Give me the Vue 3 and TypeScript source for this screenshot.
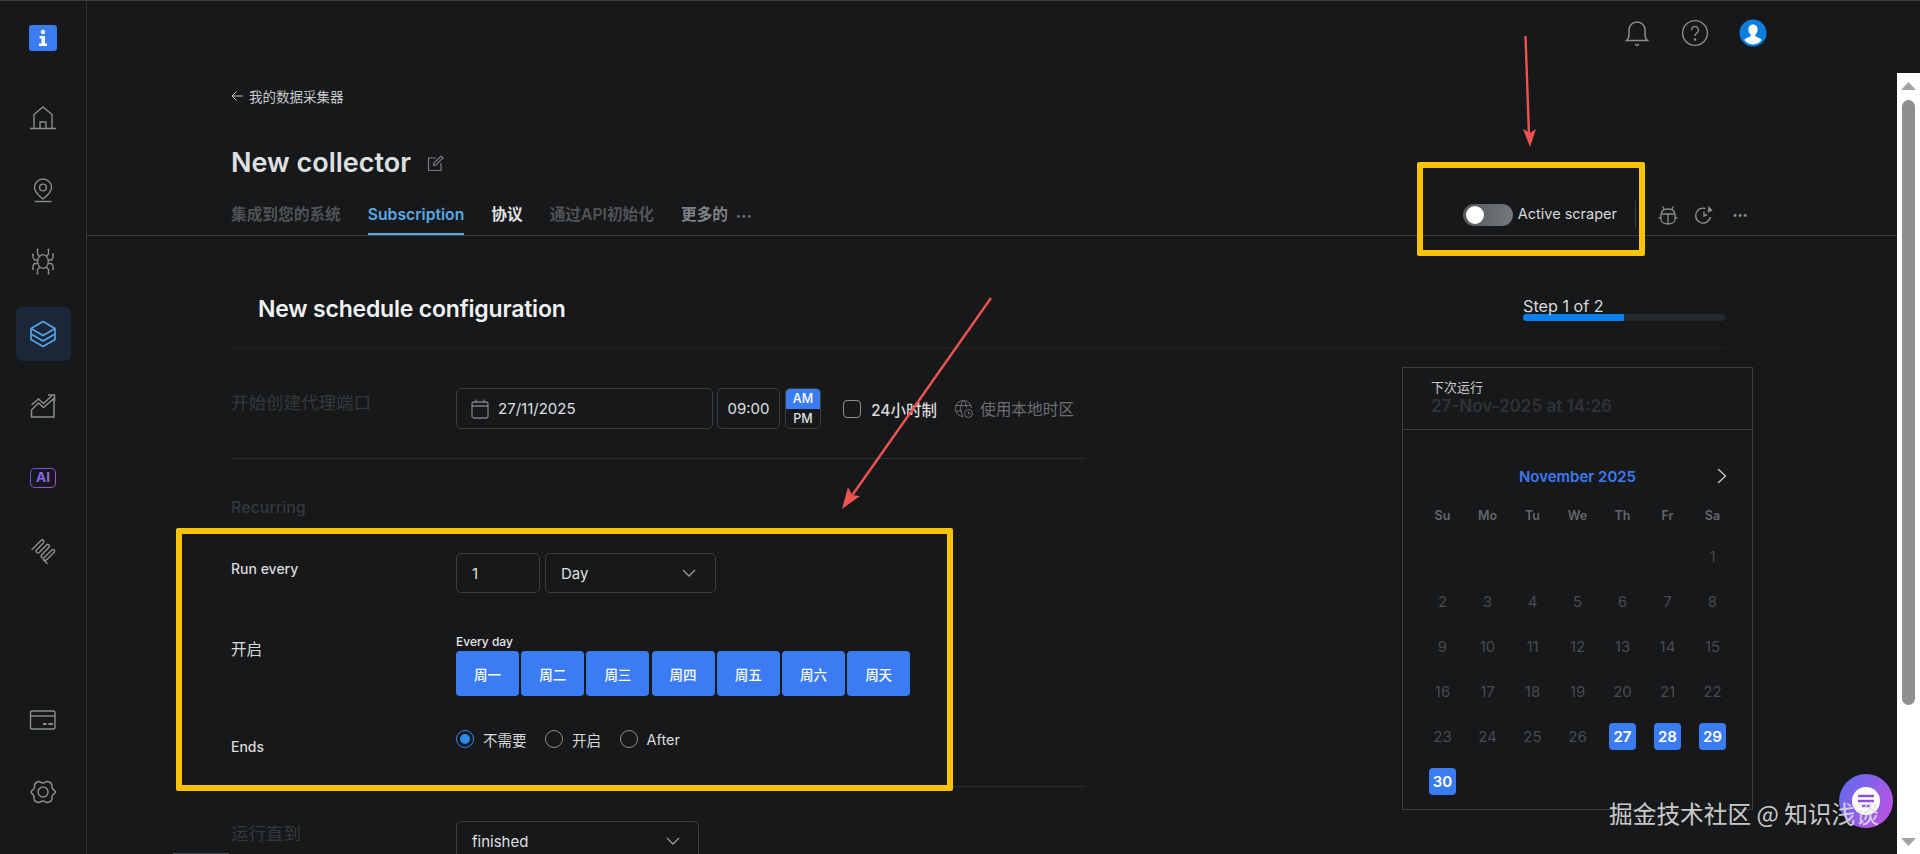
<script setup lang="ts">
const weekdays: string[] = ['周一', '周二', '周三', '周四', '周五', '周六', '周天']
const headers: string[] = ['Su', 'Mo', 'Tu', 'We', 'Th', 'Fr', 'Sa']
const selected: number[] = [27, 28, 29, 30]
const leading: number[] = [0, 0, 0, 0, 0, 0]
const days: number[] = Array.from({ length: 30 }, (_, i) => i + 1)
</script>

<template>
  <div class="app">
    <aside class="sidebar">
      <div class="logo">
        <svg width="12" height="18" viewBox="0 0 12 18"><circle cx="6" cy="3" r="2.2" fill="#fff"/><path d="M2.500 7h5.500v7.500h2V17H2v-2.500h2.500V9.500h-2z" fill="#fff"/></svg>
      </div>
      <nav class="nav">
        <a class="nav-item">
          <svg width="30" height="30" viewBox="0 0 30 30" fill="none" stroke="#8b8d8f" stroke-width="1.400"><path d="M2 26.500h26M6 26V12.500L15 5l9 7.500V26"/><path d="M12 26v-6h6v6"/></svg>
        </a>
        <a class="nav-item">
          <svg width="30" height="30" viewBox="0 0 30 30" fill="none" stroke="#8b8d8f" stroke-width="1.400"><path d="M15 25c-3.800-3.200-8.500-6.500-8.500-11.500a8.500 8.500 0 0 1 17 0C23.500 18.500 18.800 21.800 15 25z"/><circle cx="15" cy="13.500" r="3.400"/><path d="M6.500 27.500h17"/></svg>
        </a>
        <a class="nav-item">
          <svg width="30" height="30" viewBox="0 0 30 30" fill="none" stroke="#8b8d8f" stroke-width="1.300"><ellipse cx="15" cy="15.500" rx="5.300" ry="6.800"/><path d="M11.800 10.500 9.500 8V4M18.200 10.500 20.500 8V4M9.700 14H6.500L5 11.500V9M20.300 14h3.200l1.500-2.500V9M9.800 17.500H6.500L5 19.500v3M20.200 17.500h3.300l1.500 2v3M11.800 21l-2.300 2.500V27M18.200 21l2.300 2.500V27"/><g fill="#8b8d8f" stroke="none"><circle cx="9.500" cy="3.500" r="1"/><circle cx="20.500" cy="3.500" r="1"/><circle cx="5" cy="8.500" r="1"/><circle cx="25" cy="8.500" r="1"/><circle cx="5" cy="23" r="1"/><circle cx="25" cy="23" r="1"/><circle cx="9.500" cy="27.500" r="1"/><circle cx="20.500" cy="27.500" r="1"/></g></svg>
        </a>
        <a class="nav-item active">
          <svg width="30" height="30" viewBox="0 0 30 30" fill="none" stroke="#52a5e8" stroke-width="1.700" stroke-linejoin="round"><path d="M15 2.500 27 9.500v11l-12 7-12-7v-11z"/><path d="M3 9.500l12 7 12-7M3 15l12 7 12-7"/></svg>
        </a>
        <a class="nav-item">
          <svg width="30" height="30" viewBox="0 0 30 30" fill="none" stroke="#8b8d8f" stroke-width="1.500"><path d="M3.500 26V19l7-7 5 4.500L26 7.500V26z"/><path d="M3.500 14l7-6 5 4.500 8.500-8"/><path d="M20 4h6.500v6.500"/></svg>
        </a>
        <a class="nav-item">
          <span class="ai-badge">AI</span>
        </a>
        <a class="nav-item">
          <svg width="30" height="30" viewBox="0 0 30 30" fill="none" stroke="#8b8d8f" stroke-width="1.500" stroke-linecap="round" stroke-linejoin="round"><path d="M4 14.500 13 5.500c1.500-1.500 4 .5 2.500 2.300L8.500 15c-1.500 1.800 1 4 2.700 2.500L18.500 10c1.500-1.500 4 .5 2.500 2.300L13.500 20c-1.500 1.800 1 4 2.700 2.500L24 15c1.700-1.700 3.500.7 2.200 2.300L19 24.500c-1 1-2.500 1-3.500 0"/><path d="M15.500 24.500 19 28.500"/></svg>
        </a>
      </nav>
      <div class="nav-bottom">
        <a class="nav-item">
          <svg width="30" height="30" viewBox="0 0 30 30" fill="none" stroke="#8b8d8f" stroke-width="1.400"><rect x="2.500" y="6" width="24.500" height="18" rx="1.500"/><path d="M2.500 11h24.500"/><path d="M15 19h3.500M20.500 19H25" stroke-width="1.800"/></svg>
        </a>
        <a class="nav-item">
          <svg width="30" height="30" viewBox="0 0 30 30" fill="none" stroke="#8b8d8f" stroke-width="1.500"><path d="M11.200 4.500c1.300 0 1.500 1.500 3.800 1.500s2.500-1.500 3.800-1.500c1.600 0 4.200 1.500 5 2.900.6 1.200-.5 2.200.6 4.100 1.100 2 3.100 1.800 3.100 3.500s-2 1.500-3.100 3.500c-1.100 1.900 0 2.900-.6 4.100-.8 1.400-3.400 2.900-5 2.900-1.300 0-1.500-1.500-3.800-1.500s-2.500 1.500-3.800 1.500c-1.600 0-4.200-1.500-5-2.900-.6-1.200.5-2.200-.6-4.100C5 16.500 3 16.700 3 15s2-1.500 3.100-3.500c1.100-1.900 0-2.900.6-4.100.8-1.400 2.900-2.900 4.500-2.900z"/><circle cx="15" cy="15" r="5"/></svg>
        </a>
      </div>
    </aside>

    <div class="main">
      <header class="topbar">
        <svg class="top-icon" width="28" height="28" viewBox="0 0 28 28" fill="none" stroke="#8b8d8f" stroke-width="1.500"><path d="M3.500 21.500c2-1.500 2.500-3 2.500-6.500V11a8 8 0 0 1 16 0v4c0 3.500.5 5 2.500 6.500z"/><path d="M12 25l2 1.500 2-1.500"/></svg>
        <svg class="top-icon" width="28" height="28" viewBox="0 0 28 28" fill="none" stroke="#8b8d8f" stroke-width="1.400"><circle cx="14" cy="14" r="12.400"/><path d="M10.500 11a3.500 3.500 0 1 1 5.500 2.800c-1.300.9-2 1.500-2 3.200"/><circle cx="14" cy="20.500" r=".6" fill="#8b8d8f"/></svg>
        <svg class="top-icon" width="28" height="28" viewBox="0 0 28 28"><circle cx="14" cy="14" r="13.500" fill="#0b7fe0"/><path d="M14 5.500c2.800 0 4.600 2.200 4.600 5 0 2.100-1 4-2.200 5v1.800c1.500 1 5.200 1.600 6.300 3.800-2 2.700-5.200 4.400-8.700 4.400s-6.700-1.700-8.700-4.400c1.100-2.200 4.800-2.800 6.300-3.800v-1.800c-1.200-1-2.200-2.900-2.200-5 0-2.800 1.800-5 4.600-5z" fill="#fff"/></svg>
      </header>

      <div class="body">
        <div class="scroll-area">
          <section class="page-head">
            <a class="back">
              <svg width="12" height="12" viewBox="0 0 12 12" fill="none" stroke="#c9cacb" stroke-width="1"><path d="M11.500 6H1M5.500 1.500 1 6l4.500 4.500"/></svg>
              <span>我的数据采集器</span>
            </a>
            <div class="title-row">
              <h1 class="title">New collector</h1>
              <svg width="17" height="17" viewBox="0 0 17 17" fill="none" stroke="#7b7d80" stroke-width="1.200"><path d="M9 3H1.500v12.500H14V8"/><path d="M6.500 10.500 7 8l7-7 2 2-7 7z"/></svg>
            </div>
            <div class="tabs-row">
              <div class="tabs">
                <a class="tab dim">集成到您的系统</a>
                <a class="tab current">Subscription</a>
                <a class="tab strong">协议</a>
                <a class="tab dim">通过API初始化</a>
                <a class="tab more">更多的<span class="more-dots">•••</span></a>
              </div>
              <div class="actions">
                <span class="toggle"><span class="knob"></span></span>
                <span class="toggle-label">Active scraper</span>
                <span class="action-divider"></span>
                <svg width="22" height="22" viewBox="0 0 22 22" fill="none" stroke="#8b8d8f" stroke-width="1.300"><path d="M4 11c0-4 3-6 7-6s7 2 7 6v4c0 3-3 5-7 5s-7-2-7-5z"/><path d="M4 10h14M11 10v10M7 5 5.500 2.500M15 5l1.500-2.500M4 14H1.500M18 14h2.500"/></svg>
                <svg width="22" height="22" viewBox="0 0 22 22" fill="none" stroke="#8b8d8f" stroke-width="1.400"><path d="M17.500 13a7.500 7.500 0 1 1-5-8.500"/><path d="M11 7.500V12l3-1.500"/><path d="M15.500 7.500 18.500 6 16 3.500z" fill="#8b8d8f"/></svg>
                <span class="action-dots">•••</span>
              </div>
            </div>
          </section>

          <div class="workspace">
            <div class="form-col">
              <div class="form-title">
                <h2>New schedule configuration</h2>
              </div>

              <div class="section start-section">
                <div class="label faded start-label">开始创建代理端口</div>
                <div class="start-fields">
                  <div class="field date-field">
                    <svg width="18" height="20" viewBox="0 0 18 20" fill="none" stroke="#7b7d80" stroke-width="1.300"><rect x="1" y="3" width="16" height="16" rx="2"/><path d="M1 7h16M5 .5v3M13 .5v3"/></svg>
                    <span>27/11/2025</span>
                  </div>
                  <div class="field time-field">09:00</div>
                  <div class="ampm">
                    <span class="am">AM</span>
                    <span class="pm">PM</span>
                  </div>
                  <span class="checkbox"></span>
                  <span class="check-label">24小时制</span>
                  <svg class="globe" width="20" height="20" viewBox="0 0 20 20" fill="none" stroke="#6c6e71" stroke-width="1"><path d="M9 17.500a8 8 0 1 1 8.400-8.500M1.500 6.500h15M1.500 12H8M9 1.500C6.500 4 5.500 12 9 17.500M9.500 1.500c2 2 3 4.500 3 7"/><circle cx="14.500" cy="14.500" r="4"/><path d="M14.500 12.500v2.300h2"/></svg>
                  <span class="tz">使用本地时区</span>
                </div>
              </div>

              <div class="section recurring-section">
                <div class="recurring-title faded">Recurring</div>
                <div class="row row-run">
                  <div class="label row-label">Run every</div>
                  <div class="row-fields">
                    <div class="field count-field">1</div>
                    <div class="field unit-field">
                      <span>Day</span>
                      <svg width="14" height="8" viewBox="0 0 14 8" fill="none" stroke="#9a9c9e" stroke-width="1.300"><path d="m1 1 6 6 6-6"/></svg>
                    </div>
                  </div>
                </div>
                <div class="row row-days">
                  <div class="label row-label cjk-label">开启</div>
                  <div class="days-wrap">
                    <div class="days-caption">Every day</div>
                    <div class="days">
                      <button v-for="d in weekdays" :key="d" type="button" class="day-btn">{{ d }}</button>
                    </div>
                  </div>
                </div>
                <div class="row row-ends">
                  <div class="label ends-label">Ends</div>
                  <div class="radios">
                    <span class="radio on"><span class="dot"></span></span>
                    <span class="radio-text">不需要</span>
                    <span class="radio"></span>
                    <span class="radio-text">开启</span>
                    <span class="radio"></span>
                    <span class="radio-text">After</span>
                  </div>
                </div>
              </div>

              <div class="row row-until">
                <div class="label faded until-label">运行直到</div>
                <div class="field until-field">
                  <span>finished</span>
                  <svg width="14" height="8" viewBox="0 0 14 8" fill="none" stroke="#9a9c9e" stroke-width="1.300"><path d="m1 1 6 6 6-6"/></svg>
                </div>
              </div>
            </div>

            <div class="side-col">
              <div class="step">
                <div class="step-text">Step 1 of 2</div>
                <div class="step-track"><div class="step-fill"></div></div>
              </div>
              <div class="calendar">
                <div class="cal-head">
                  <div class="next-label">下次运行</div>
                  <div class="next-value">27-Nov-2025 at 14:26</div>
                </div>
                <div class="cal-body">
                  <div class="month-row">
                    <span></span>
                    <span class="month">November 2025</span>
                    <svg class="month-next" width="10" height="16" viewBox="0 0 10 16" fill="none" stroke="#c9cacb" stroke-width="1.300"><path d="m1 1 7.500 7L1 15"/></svg>
                  </div>
                  <div class="week-head">
                    <span v-for="h in headers" :key="h">{{ h }}</span>
                  </div>
                  <div class="cal-grid">
                    <span v-for="(_, i) in leading" :key="'b' + i" class="cell"></span>
                    <span v-for="d in days" :key="d" class="cell">
                      <span class="num" :class="{ sel: selected.includes(d) }">{{ d }}</span>
                    </span>
                  </div>
                </div>
              </div>
            </div>
          </div>
        </div>
        <div class="scrollbar">
          <svg width="15" height="8" viewBox="0 0 15 8"><path d="M7.500 0 15 8H0z" fill="#a3a3a3"/></svg>
          <div class="thumb"></div>
          <svg class="arrow-down" width="15" height="8" viewBox="0 0 15 8"><path d="M7.500 8 15 0H0z" fill="#a3a3a3"/></svg>
        </div>
      </div>
    </div>

    <div class="hscroll-thumb"></div>

    <!-- annotations drawn over the screenshot -->
    <div class="mark mark-toggle"></div>
    <div class="mark mark-form"></div>
    <svg class="arrows" width="1920" height="854" viewBox="0 0 1920 854" fill="none">
      <path d="M1525.500 36 1529 135" stroke="#ef5350" stroke-width="2.400"/>
      <path d="M1530 147 1523 129 1530 133 1536 129z" fill="#ef5350"/>
      <path d="M991 298 851 497" stroke="#ef5350" stroke-width="2.400"/>
      <path d="M842 509 848 487 852 495 860 496z" fill="#ef5350"/>
    </svg>
    <div class="chat">
      <div class="chat-inner">
        <svg width="16" height="14" viewBox="0 0 16 14"><path d="M0 2h16M0 7h16M4 12h8" stroke="#8c4fe0" stroke-width="2.400"/></svg>
      </div>
    </div>
    <div class="watermark">掘金技术社区 @ 知识浅谈</div>
  </div>
</template>

<style>
html, body { margin: 0; background: #16181a; overflow: hidden; }
</style>

<style scoped>
.app {
  position: relative;
  display: flex;
  width: 1920px;
  height: 854px;
  box-sizing: border-box;
  overflow: hidden;
  border-top: 1px solid #3a3c3e;
  background: #16181a;
  color: #e6e7e8;
  font-family: Inter, "Noto Sans CJK SC", sans-serif;
}

/* sidebar */
.sidebar {
  display: flex;
  flex-direction: column;
  align-items: center;
  width: 86px;
  flex: none;
  border-right: 1px solid #303336;
}
.logo {
  display: flex;
  align-items: center;
  justify-content: center;
  width: 28px;
  height: 26px;
  margin-top: 24px;
  background: #3b7cf5;
  border-radius: 3px;
}
.nav {
  display: flex;
  flex-direction: column;
  gap: 18.200px;
  margin-top: 39px;
}
.nav-bottom {
  display: flex;
  flex-direction: column;
  gap: 18px;
  margin-top: auto;
  margin-bottom: 35px;
}
.nav-item {
  display: flex;
  align-items: center;
  justify-content: center;
  width: 55px;
  height: 54px;
  border-radius: 6px;
}
.nav-item.active { background: #1b2738; }
.ai-badge {
  display: flex;
  align-items: center;
  justify-content: center;
  width: 24px;
  height: 18px;
  box-sizing: content-box;
  border: 1.500px solid transparent;
  border-radius: 5px;
  background: linear-gradient(#16181a, #16181a) padding-box, linear-gradient(135deg, #6a4fd8, #b04fe0) border-box;
  color: #8d66ea;
  font-size: 13.500px;
  font-weight: 700;
  line-height: 1;
}

/* main */
.main {
  display: flex;
  flex-direction: column;
  flex: 1;
  min-width: 0;
}
.topbar {
  display: flex;
  align-items: center;
  justify-content: flex-end;
  gap: 30px;
  height: 72px;
  padding: 0 153px 8px 0;
  box-sizing: border-box;
  flex: none;
}
.body {
  display: flex;
  flex: 1;
  min-height: 0;
}
.scroll-area {
  flex: 1;
  min-width: 0;
  overflow: hidden;
}
.scrollbar {
  display: flex;
  flex-direction: column;
  align-items: center;
  width: 23px;
  flex: none;
  padding-top: 9px;
  box-sizing: border-box;
  background: #fff;
}
.thumb {
  width: 13px;
  height: 605px;
  margin-top: 10px;
  border-radius: 7px;
  background: #8f8f8f;
}
.arrow-down { margin-top: 133px; }

/* page head */
.page-head { padding-top: 13px; }
.back {
  display: flex;
  align-items: center;
  gap: 6px;
  height: 20px;
  margin-left: 144px;
  font-size: 13.500px;
  color: #c9cacb;
}
.title-row {
  display: flex;
  align-items: center;
  gap: 16px;
  height: 34px;
  margin: 40px 0 0 144px;
}
.title {
  margin: 0;
  font-size: 27px;
  font-weight: 600;
  line-height: 34px;
  color: #dfe0e1;
}
.tabs-row {
  display: flex;
  justify-content: space-between;
  height: 35px;
  margin-top: 20px;
  padding: 0 146px 0 144px;
  border-bottom: 1px solid #3a3d40;
}
.tabs {
  display: flex;
  gap: 27px;
}
.tab {
  height: 35px;
  box-sizing: border-box;
  line-height: 30px;
  font-size: 15.700px;
  font-weight: 600;
  white-space: nowrap;
}
.tab.dim { color: #505356; }
.tab.current {
  color: #5aa8e6;
  border-bottom: 2px solid #5aa8e6;
}
.tab.strong { color: #e2e3e4; }
.tab.more { color: #7f8184; }
.more-dots {
  margin-left: 8px;
  font-size: 9px;
  letter-spacing: 1px;
  vertical-align: 1px;
  color: #6c6e71;
}
.actions {
  display: flex;
  align-items: center;
  height: 29px;
}
.toggle {
  display: flex;
  align-items: center;
  width: 50px;
  height: 22px;
  padding-left: 3px;
  box-sizing: border-box;
  border-radius: 11px;
  background: linear-gradient(90deg, #55585b, #75787b);
}
.knob {
  width: 18px;
  height: 18px;
  border-radius: 50%;
  background: #fff;
}
.toggle-label {
  margin-left: 5px;
  padding-bottom: 2px;
  font-size: 14.500px;
  color: #d8d9da;
  white-space: nowrap;
}
.action-divider {
  width: 1px;
  height: 27px;
  margin: 0 21px 0 18px;
  background: #3a3d40;
}
.actions svg { margin-right: 14px; }
.action-dots {
  width: 22px;
  text-align: center;
  font-size: 9px;
  color: #8b8d8f;
}

/* workspace */
.workspace {
  display: flex;
  gap: 316px;
  padding-left: 144px;
}
.form-col { width: 855px; flex: none; }
.side-col { width: 351px; flex: none; }
.form-title {
  height: 113px;
  box-sizing: border-box;
  padding: 57px 0 0 27px;
  margin-right: -640px;
  border-bottom: 1px solid #1f2123;
}
.form-title h2 {
  margin: 0;
  font-size: 23px;
  font-weight: 600;
  letter-spacing: -.2px;
  line-height: 32px;
  color: #f1f2f3;
}
.section { border-bottom: 1px solid #2b2e31; }
.label { font-size: 14px; font-weight: 500; color: #d8d9da; }
.row-label.cjk-label { font-size: 15.500px; font-weight: 400; margin-top: 7px; }
.faded { color: #35383b; }
.start-section {
  display: flex;
  height: 110px;
  box-sizing: border-box;
  padding-top: 39px;
}
.start-label {
  width: 225px;
  flex: none;
  margin-top: 3px;
  font-size: 17.500px;
  font-weight: 400;
  line-height: 24px;
}
.start-fields {
  display: flex;
  align-items: center;
  height: 41px;
}
.field {
  display: flex;
  align-items: center;
  box-sizing: border-box;
  border: 1px solid #3a3d40;
  border-radius: 5px;
  font-size: 15px;
  color: #dfe0e1;
}
.date-field {
  gap: 9px;
  width: 257px;
  height: 41px;
  padding-left: 14px;
}
.time-field {
  justify-content: center;
  width: 63px;
  height: 41px;
  margin-left: 4px;
}
.ampm {
  display: flex;
  flex-direction: column;
  width: 36px;
  height: 41px;
  margin-left: 5px;
  border: 1px solid #3a3d40;
  border-radius: 5px;
  box-sizing: border-box;
  overflow: hidden;
  font-size: 12.500px;
  font-weight: 500;
  text-align: center;
}
.am { height: 20px; line-height: 20px; background: #3b7cf5; color: #fff; }
.pm { flex: 1; line-height: 19px; color: #dfe0e1; }
.checkbox {
  width: 18px;
  height: 18px;
  box-sizing: border-box;
  margin-left: 22px;
  border: 1px solid #8b8d8f;
  border-radius: 4px;
}
.check-label {
  margin-left: 10px;
  font-size: 15.500px;
  font-weight: 500;
  color: #dadbdc;
}
.globe { margin-left: 17px; }
.tz {
  margin-left: 6px;
  font-size: 15.700px;
  color: #6c6e71;
}
.recurring-section { padding-bottom: 29px; }
.recurring-title {
  margin-top: 36px;
  font-size: 16px;
  font-weight: 500;
  line-height: 24px;
}
.row {
  display: flex;
  align-items: flex-start;
}
.row-label {
  width: 225px;
  flex: none;
  margin-top: 6px;
  line-height: 20px;
}
.row-run { margin-top: 34px; }
.row-fields { display: flex; gap: 5px; }
.count-field {
  width: 84px;
  height: 40px;
  padding-left: 15px;
}
.unit-field {
  justify-content: space-between;
  width: 171px;
  height: 40px;
  padding: 0 19px 0 15px;
}
.row-days { margin-top: 40px; }
.days-caption {
  font-size: 12px;
  font-weight: 500;
  line-height: 18px;
}
.days {
  display: flex;
  gap: 2.200px;
}
.day-btn {
  width: 63px;
  height: 45px;
  padding: 0;
  border: 0;
  border-radius: 4px;
  background: #3b7cf5;
  color: #fff;
  font-family: inherit;
  font-size: 13.500px;
  font-weight: 500;
}
.row-ends { margin-top: 33px; }
.ends-label {
  width: 225px;
  flex: none;
  margin-top: 8px;
  line-height: 20px;
}
.radios {
  display: flex;
  align-items: center;
  height: 20px;
}
.radio {
  display: flex;
  align-items: center;
  justify-content: center;
  width: 18px;
  height: 18px;
  box-sizing: border-box;
  border: 1px solid #8b8d8f;
  border-radius: 50%;
}
.radio.on { border-color: #2b8cf0; }
.dot {
  width: 10px;
  height: 10px;
  border-radius: 50%;
  background: #2b8cf0;
}
.radio-text {
  margin: 0 18.500px 0 9px;
  font-size: 14.500px;
  color: #d8d9da;
}
.row-until { padding-top: 34px; }
.until-label {
  width: 225px;
  flex: none;
  margin-top: 1px;
  font-size: 17.500px;
  font-weight: 400;
  line-height: 24px;
}
.until-field {
  justify-content: space-between;
  width: 243px;
  height: 40px;
  padding: 0 18px 0 15px;
}

/* side */
.step {
  padding: 60px 0 0 121px;
  height: 131px;
  box-sizing: border-box;
}
.step-text {
  font-size: 16.200px;
  line-height: 20px;
  color: #d8d9da;
}
.step-track {
  width: 202px;
  height: 7px;
  margin-top: -2px;
  border-radius: 4px;
  background: #25282b;
  overflow: hidden;
}
.step-fill {
  width: 50%;
  height: 100%;
  background: #0a7ff0;
}
.calendar {
  border: 1px solid #3a3d40;
  height: 443px;
  box-sizing: border-box;
}
.cal-head {
  height: 62px;
  box-sizing: border-box;
  padding: 10px 0 0 28px;
  border-bottom: 1px solid #3a3d40;
}
.next-label {
  font-size: 13px;
  line-height: 18px;
  color: #c9cacb;
}
.next-value {
  margin-top: -1px;
  font-size: 17px;
  font-weight: 600;
  line-height: 22px;
  color: #303336;
}
.cal-body { padding: 34px 17px 0; }
.month-row {
  display: grid;
  grid-template-columns: 1fr auto 1fr;
  align-items: center;
  height: 24px;
}
.month {
  font-size: 15px;
  font-weight: 600;
  color: #3b7cf5;
}
.month-next { justify-self: end; margin-right: 8px; }
.week-head {
  display: grid;
  grid-template-columns: repeat(7, 45px);
  height: 24px;
  margin-top: 16px;
  font-size: 12.500px;
  font-weight: 600;
  line-height: 24px;
  text-align: center;
  color: #63666a;
}
.cal-grid {
  display: grid;
  grid-template-columns: repeat(7, 45px);
  grid-auto-rows: 45px;
  margin-top: 6px;
}
.cell {
  display: flex;
  align-items: center;
  justify-content: center;
}
.num {
  display: flex;
  align-items: center;
  justify-content: center;
  width: 27px;
  height: 27px;
  border-radius: 4px;
  font-size: 15px;
  color: #484b4f;
}
.num.sel {
  background: #3b7cf5;
  color: #fff;
  font-weight: 600;
}

/* overlays */
.hscroll-thumb {
  position: absolute;
  left: 173px;
  top: 852px;
  width: 56px;
  height: 1px;
  background: #4a4d50;
}
.mark {
  position: absolute;
  box-sizing: border-box;
  border: 6px solid #f8c400;
  border-radius: 2px;
}
.mark-toggle { left: 1417px; top: 161px; width: 228px; height: 94px; }
.mark-form { left: 176px; top: 527px; width: 777px; height: 263px; }
.arrows {
  position: absolute;
  left: 0;
  top: -1px;
  pointer-events: none;
}
.chat {
  position: absolute;
  left: 1839px;
  top: 773px;
  display: flex;
  align-items: center;
  justify-content: center;
  width: 54px;
  height: 54px;
  border-radius: 50%;
  background: linear-gradient(120deg, #5a6cf0, #c650e0);
}
.chat-inner {
  display: flex;
  align-items: center;
  justify-content: center;
  width: 28px;
  height: 28px;
  border-radius: 50%;
  background: #fff;
}
.watermark {
  position: absolute;
  left: 1609px;
  top: 797px;
  font-size: 23.700px;
  line-height: 30px;
  color: rgba(225, 225, 225, .9);
  white-space: nowrap;
  font-family: "Noto Sans CJK SC", Inter, sans-serif;
}
</style>
